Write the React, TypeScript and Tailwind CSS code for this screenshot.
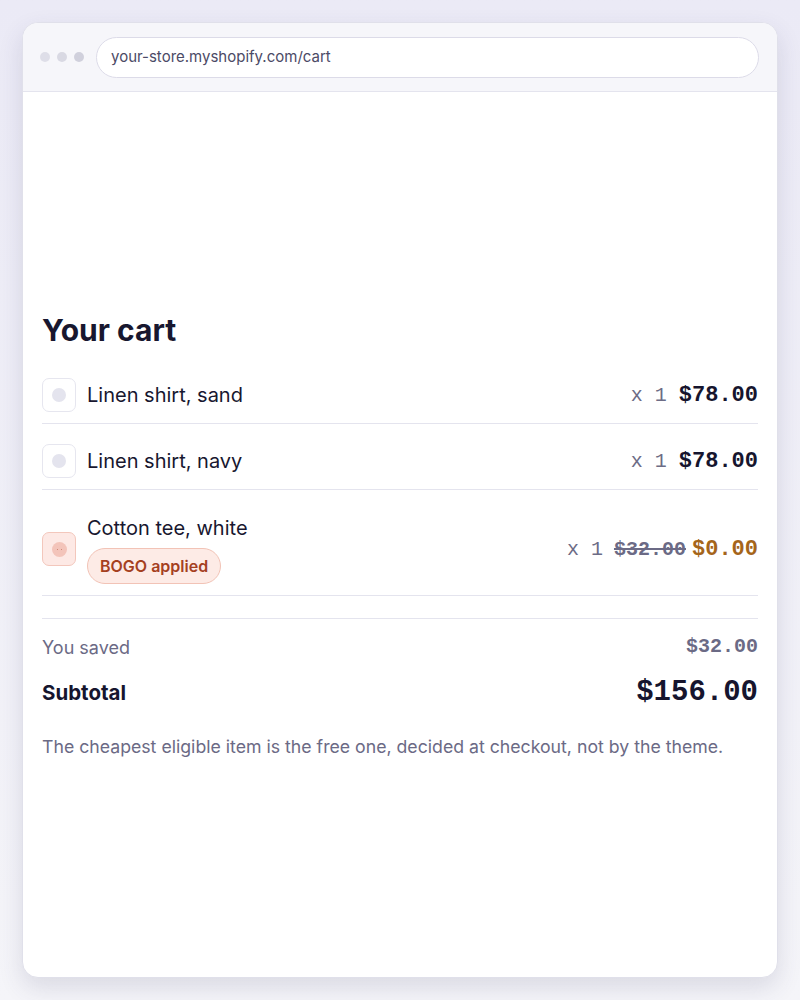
const sans = "font-['Inter','Liberation_Sans',sans-serif]";
const mono = "font-['Liberation_Mono','DejaVu_Sans_Mono',monospace]";

type Item = { name: string; qty: number; price: string; was?: string; bogo?: boolean };

const items: Item[] = [
  { name: 'Linen shirt, sand', qty: 1, price: '$78.00' },
  { name: 'Linen shirt, navy', qty: 1, price: '$78.00' },
  { name: 'Cotton tee, white', qty: 1, price: '$0.00', was: '$32.00', bogo: true },
];

function Thumb({ bogo }: { bogo?: boolean }) {
  if (bogo) {
    return (
      <div className="w-[34px] h-[34px] shrink-0 rounded-[7px] border border-[#f3c7bc] bg-[#fde9e5] flex items-center justify-center">
        <div className="w-[15px] h-[15px] rounded-full bg-[#f3c4ba] flex items-center justify-center gap-[3px]">
          <span className="w-[1px] h-[1px] bg-[#d0897a]" />
          <span className="w-[1px] h-[1px] bg-[#d0897a]" />
        </div>
      </div>
    );
  }
  return (
    <div className="w-[34px] h-[34px] shrink-0 rounded-[7px] border border-[#e6e6ef] bg-white flex items-center justify-center">
      <div className="w-[14px] h-[14px] rounded-full bg-[#e4e4ee]" />
    </div>
  );
}

function CartRow({ item }: { item: Item }) {
  return (
    <div className={`flex items-center ${item.bogo ? 'pt-[24px]' : 'pt-[20px]'} pb-[11px] border-b border-[#e4e4ee]`}>
      <Thumb bogo={item.bogo} />
      <div className="ml-[11px] flex-1 flex flex-col items-start">
        <div className="text-[20px] leading-[28px] text-[#18172f]">{item.name}</div>
        {item.bogo && (
          <div className="mt-[6px] h-[36px] px-[12px] flex items-center rounded-full border border-[#f2c3b6] bg-[#fdebe6] text-[16px] font-semibold text-[#a5401f]">
            BOGO applied
          </div>
        )}
      </div>
      <div className={`flex items-baseline ${mono}`}>
        <span className="text-[20px] text-[#6d6c86]">x {item.qty}</span>
        {item.was && (
          <span className="ml-[11px] text-[20px] font-bold text-[#6b6a85] line-through">{item.was}</span>
        )}
        <span
          className={`${item.was ? 'ml-[6px] text-[#a5651a]' : 'ml-[12px] text-[#16152e]'} text-[22px] font-bold`}
        >
          {item.price}
        </span>
      </div>
    </div>
  );
}

export default function App() {
  return (
    <div className={`w-[800px] h-[1000px] bg-gradient-to-b from-[#ebeaf6] to-[#f5f5f9] p-[22px] ${sans}`}>
      <div className="h-full flex flex-col rounded-[16px] border border-[#e0e0ea] bg-white overflow-hidden shadow-[0_10px_24px_rgba(60,60,100,0.14)]">
        {/* Browser chrome */}
        <div className="h-[69px] shrink-0 flex items-center bg-[#f6f6fa] border-b border-[#e4e4ee] pl-[17px] pr-[18px]">
          <div className="flex gap-[7px]">
            <span className="w-[10px] h-[10px] rounded-full bg-[#dedee8]" />
            <span className="w-[10px] h-[10px] rounded-full bg-[#d9d9e3]" />
            <span className="w-[10px] h-[10px] rounded-full bg-[#d0d0dc]" />
          </div>
          <div className="ml-[12px] flex-1 h-[41px] flex items-center rounded-full border border-[#dcdbe8] bg-white pl-[14px] text-[15px] text-[#4b4a66]">
            your-store.myshopify.com/cart
          </div>
        </div>

        {/* Page */}
        <div className="flex-1 flex flex-col justify-center px-[19px] pt-[4px]">
          <h1 className="text-[30px] leading-[36px] font-bold text-[#18172f]">Your cart</h1>
          <div className="mt-[10px]">
            {items.map((item) => (
              <CartRow key={item.name} item={item} />
            ))}
          </div>

          <div className="mt-[22px] border-t border-[#e4e4ee] pt-[13px]">
            <div className="flex items-center justify-between">
              <span className="text-[18px] text-[#6b6a85]">You saved</span>
              <span className={`${mono} text-[20px] font-bold text-[#6b6a85]`}>$32.00</span>
            </div>
            <div className="mt-[9px] flex items-center justify-between">
              <span className="text-[20.5px] font-bold text-[#16152e]">Subtotal</span>
              <span className={`${mono} text-[29px] font-bold text-[#16152e]`}>$156.00</span>
            </div>
            <p className="mt-[19px] text-[17.7px] text-[#6b6a85]">
              The cheapest eligible item is the free one, decided at checkout, not by the theme.
            </p>
          </div>
        </div>
      </div>
    </div>
  );
}
